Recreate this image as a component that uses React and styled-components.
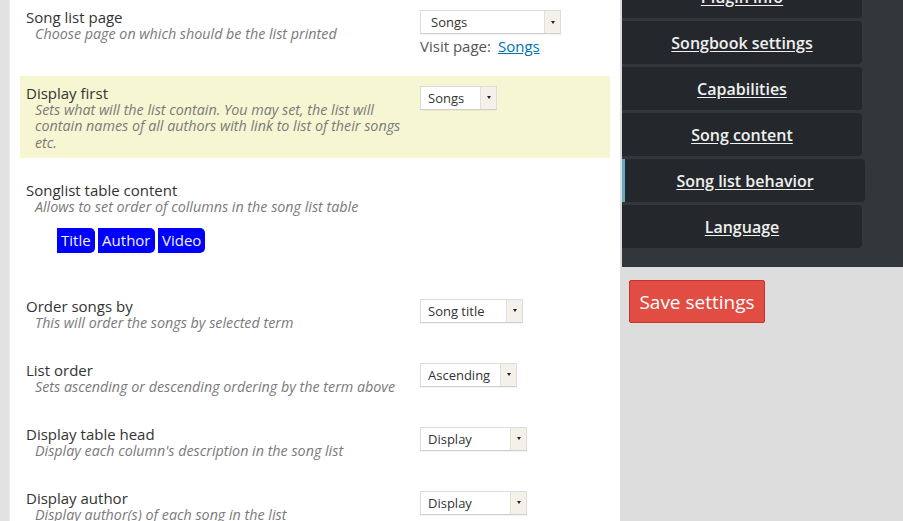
import React from "react";
import styled, { createGlobalStyle } from "styled-components";

const Global = createGlobalStyle`
  html, body { margin: 0; padding: 0; }
  body {
    width: 903px; height: 521px; overflow: hidden;
    font-family: "Open Sans", "Liberation Sans", sans-serif;
    background: #dddddd;
  }
`;

const Page = styled.div`
  display: flex;
  width: 903px;
  height: 521px;
  overflow: hidden;
`;

const Strip = styled.div`
  width: 9px;
  flex: none;
  background: #e2e2e2;
  border-right: 1px solid #e9e9e9;
`;

const Main = styled.div`
  width: 590px;
  flex: none;
  background: #ffffff;
  padding: 0 10px;
  display: flex;
  flex-direction: column;
  gap: 14.5px;
`;

const Row = styled.div`
  display: flex;
  padding: 9px 0 7px 6px;
  background: ${(p) => (p.$hl ? "#f6f6d2" : "transparent")};
`;

const Left = styled.div`
  width: ${(p) => (p.$wide ? "auto" : "394px")};
  flex: none;
`;

const Right = styled.div`
  display: flex;
  flex-direction: column;
  align-items: flex-start;
`;

const Title = styled.div`
  font-size: 15px;
  line-height: 17px;
  color: #333;
`;

const Desc = styled.div`
  font-size: 14.3px;
  line-height: 16.5px;
  font-style: italic;
  color: #7a7a7a;
  padding-left: 9px;
`;

const Select = styled.div`
  margin-top: 1px;
  height: 24px;
  width: ${(p) => p.$w}px;
  box-sizing: border-box;
  display: flex;
  border: 1px solid #dcdcdc;
  border-bottom-color: #cfcfcf;
  background: #fff;
  box-shadow: 0 1px 0 rgba(0, 0, 0, 0.04);
`;

const SelectText = styled.div`
  flex: 1;
  font-size: 13px;
  line-height: 22px;
  color: #333;
  padding-left: ${(p) => p.$pl || 6}px;
  white-space: nowrap;
  overflow: hidden;
`;

const Arrow = styled.div`
  width: 15px;
  flex: none;
  background: #f3f1ea;
  border-left: 1px solid #e2e0d8;
  display: flex;
  align-items: center;
  justify-content: center;
  &::after {
    content: "";
    border-left: 2.5px solid transparent;
    border-right: 2.5px solid transparent;
    border-top: 3px solid #222;
  }
`;

const Visit = styled.div`
  margin-top: 4px;
  font-size: 15px;
  line-height: 16px;
  color: #555;
  white-space: nowrap;
  a {
    color: #0073aa;
    text-decoration: underline;
    margin-left: 7px;
  }
`;

const Tags = styled.div`
  display: flex;
  gap: 3.5px;
  margin: 13px 0 14px 31px;
`;

const Tag = styled.div`
  height: 25px;
  line-height: 25px;
  padding: 0 4px;
  background: #0000ff;
  color: #f2f2ff;
  font-size: 15px;
  border-radius: 0 5px 5px 0;
`;

const Side = styled.div`
  flex: 1;
  display: flex;
  flex-direction: column;
  align-items: flex-start;
  padding-left: 2px;
  background: #dddddd;
`;

const Panel = styled.div`
  align-self: stretch;
  background: #32373c;
  padding-bottom: 19px;
`;

const NavList = styled.div`
  display: flex;
  flex-direction: column;
  gap: 3px;
  margin-top: -25px;
`;

const NavItem = styled.div`
  width: ${(p) => (p.$active ? 243 : 240)}px;
  height: 43px;
  box-sizing: border-box;
  background: #24282c;
  border-radius: 0 4px 4px 0;
  border-left: ${(p) => (p.$active ? "3px solid #66a9c2" : "0")};
  display: flex;
  align-items: center;
  justify-content: center;
  font-size: 16px;
  font-weight: 600;
  color: #f0f0f0;
  text-decoration: underline;
  text-underline-offset: 2px;
`;

const SaveButton = styled.button`
  margin: 13px 0 0 7px;
  width: 136px;
  height: 43px;
  background: #e14d43;
  border: 1px solid #c2352d;
  border-radius: 2px;
  color: #fff;
  font-family: "Open Sans", "Liberation Sans", sans-serif;
  font-size: 19px;
  padding: 0;
`;

const sel = (text, w, pl) => (
  <Select $w={w}>
    <SelectText $pl={pl}>{text}</SelectText>
    <Arrow />
  </Select>
);

export default function App() {
  return (
    <Page>
      <Global />
      <Strip />
      <Main>
        <Row>
          <Left>
            <Title>Song list page</Title>
            <Desc>Choose page on which should be the list printed</Desc>
          </Left>
          <Right>
            {sel("Songs", 141, 10)}
            <Visit>
              Visit page:<a href="#">Songs</a>
            </Visit>
          </Right>
        </Row>
        <Row $hl>
          <Left>
            <Title>Display first</Title>
            <Desc>
              Sets what will the list contain. You may set, the list will contain names of all authors with link to
              list of their songs etc.
            </Desc>
          </Left>
          <Right>{sel("Songs", 77, 7)}</Right>
        </Row>
        <Row>
          <Left $wide>
            <Title>Songlist table content</Title>
            <Desc>Allows to set order of collumns in the song list table</Desc>
            <Tags>
              <Tag>Title</Tag>
              <Tag>Author</Tag>
              <Tag>Video</Tag>
            </Tags>
          </Left>
        </Row>
        <Row>
          <Left>
            <Title>Order songs by</Title>
            <Desc>This will order the songs by selected term</Desc>
          </Left>
          <Right>{sel("Song title", 103, 7)}</Right>
        </Row>
        <Row>
          <Left>
            <Title>List order</Title>
            <Desc>Sets ascending or descending ordering by the term above</Desc>
          </Left>
          <Right>{sel("Ascending", 97, 7)}</Right>
        </Row>
        <Row>
          <Left>
            <Title>Display table head</Title>
            <Desc>Display each column's description in the song list</Desc>
          </Left>
          <Right>{sel("Display", 107, 7)}</Right>
        </Row>
        <Row>
          <Left>
            <Title>Display author</Title>
            <Desc>Display author(s) of each song in the list</Desc>
          </Left>
          <Right>{sel("Display", 107, 7)}</Right>
        </Row>
      </Main>
      <Side>
        <Panel>
          <NavList>
            <NavItem>Plugin info</NavItem>
            <NavItem>Songbook settings</NavItem>
            <NavItem>Capabilities</NavItem>
            <NavItem>Song content</NavItem>
            <NavItem $active>Song list behavior</NavItem>
            <NavItem>Language</NavItem>
          </NavList>
        </Panel>
        <SaveButton>Save settings</SaveButton>
      </Side>
    </Page>
  );
}
